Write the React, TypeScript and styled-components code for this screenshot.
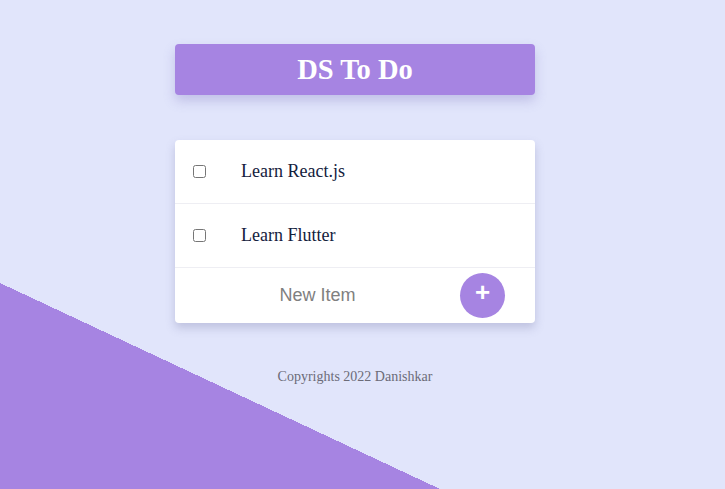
import React, { useState } from "react";
import styled, { createGlobalStyle } from "styled-components";

const GlobalStyle = createGlobalStyle`
  html, body {
    margin: 0;
    padding: 0;
  }
  body {
    min-height: 489px;
    background-color: #e1e5fb;
    background-image: linear-gradient(to top right, #a684e2 50%, transparent 50%);
    background-repeat: no-repeat;
    background-position: left bottom;
    background-size: 440px 206px;
    background-attachment: fixed;
    font-family: "Liberation Serif", "Times New Roman", serif;
    overflow: hidden;
  }
`;

const Page = styled.main`
  display: flex;
  flex-direction: column;
  align-items: center;
  padding: 44px 15px 0 0;
  min-height: 489px;
  box-sizing: border-box;
`;

const Header = styled.header`
  width: 360px;
  height: 51px;
  box-sizing: border-box;
  background: #a684e2;
  border-radius: 4px;
  box-shadow: 0 6px 12px rgba(120, 110, 190, 0.3);
  display: flex;
  align-items: center;
  justify-content: center;
`;

const Title = styled.h1`
  margin: 0;
  color: #ffffff;
  font-family: "Liberation Serif", "Times New Roman", serif;
  font-weight: 700;
  font-size: 28.5px;
`;

const Card = styled.section`
  width: 360px;
  margin-top: 45px;
  background: #ffffff;
  border-radius: 4px;
  box-shadow: 0 5px 10px rgba(100, 100, 150, 0.28);
  display: flex;
  flex-direction: column;
`;

const Row = styled.label`
  display: flex;
  align-items: center;
  height: 63px;
  padding-left: 18px;
  border-bottom: 1px solid #eeeef3;
  cursor: pointer;
`;

const Check = styled.input`
  width: 13px;
  height: 13px;
  margin: 0;
  accent-color: #a684e2;
`;

const ItemText = styled.span<{ $done: boolean }>`
  margin-left: 35px;
  font-family: "Liberation Serif", "Times New Roman", serif;
  font-size: 18px;
  color: #14213d;
  text-decoration: ${(p) => (p.$done ? "line-through" : "none")};
`;

const NewRow = styled.form`
  display: flex;
  align-items: center;
  height: 55px;
  padding: 0 30px 0 0;
`;

const NewInput = styled.input`
  flex: 1;
  min-width: 0;
  border: none;
  outline: none;
  background: transparent;
  text-align: center;
  font-family: "Liberation Sans", Arial, sans-serif;
  font-size: 18px;
  color: #333;
  padding: 0;
  &::placeholder {
    color: #808080;
  }
`;

const AddButton = styled.button`
  width: 45px;
  height: 45px;
  border-radius: 50%;
  border: none;
  background: #a684e2;
  color: #ffffff;
  font-family: "Liberation Sans", Arial, sans-serif;
  font-size: 26px;
  font-weight: 700;
  line-height: 1;
  padding: 0 0 7px;
  display: flex;
  align-items: center;
  justify-content: center;
  cursor: pointer;
`;

const Footer = styled.footer`
  margin-top: 46px;
  font-family: "Liberation Serif", "Times New Roman", serif;
  font-size: 14px;
  color: #6b6b78;
`;

export default function App() {
  const [items, setItems] = useState([
    { text: "Learn React.js", done: false },
    { text: "Learn Flutter", done: false },
  ]);
  const [draft, setDraft] = useState("");

  const toggle = (i: number) =>
    setItems((prev) => prev.map((it, j) => (j === i ? { ...it, done: !it.done } : it)));

  const add = (e: React.FormEvent) => {
    e.preventDefault();
    if (!draft.trim()) return;
    setItems((prev) => [...prev, { text: draft.trim(), done: false }]);
    setDraft("");
  };

  return (
    <>
      <GlobalStyle />
      <Page>
        <Header>
          <Title>DS To Do</Title>
        </Header>
        <Card>
          {items.map((it, i) => (
            <Row key={i}>
              <Check type="checkbox" checked={it.done} onChange={() => toggle(i)} />
              <ItemText $done={it.done}>{it.text}</ItemText>
            </Row>
          ))}
          <NewRow onSubmit={add}>
            <NewInput
              placeholder="New Item"
              value={draft}
              onChange={(e) => setDraft(e.target.value)}
            />
            <AddButton type="submit">+</AddButton>
          </NewRow>
        </Card>
        <Footer>Copyrights 2022 Danishkar</Footer>
      </Page>
    </>
  );
}
